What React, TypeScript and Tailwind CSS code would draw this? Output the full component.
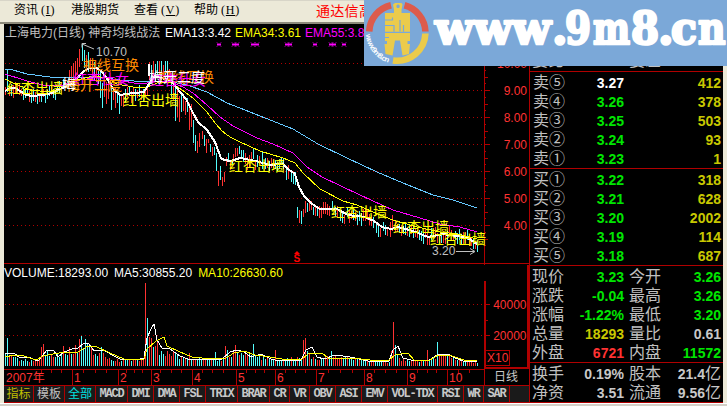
import React from "react";

type Point = [number, number];
type Candle = [number, number, number, number];

const RED = "#ff3232";
const CYAN = "#54fcfc";
const LINE = "#b00000";

const tabs = [
  { label: "指标", width: "w-[30px]", color: "text-[#c0c000]" },
  { label: "模板", width: "w-[31px]", color: "text-[#c0c0c0]" },
  { label: "全部", width: "w-[31px]", color: "text-[#00e0e0]" },
  { label: "MACD", width: "w-[32px]" },
  { label: "DMI", width: "w-[26px]" },
  { label: "DMA", width: "w-[26px]" },
  { label: "FSL", width: "w-[26px]" },
  { label: "TRIX", width: "w-[32px]" },
  { label: "BRAR", width: "w-[32px]" },
  { label: "CR", width: "w-[20px]" },
  { label: "VR", width: "w-[20px]" },
  { label: "OBV", width: "w-[26px]" },
  { label: "ASI", width: "w-[26px]" },
  { label: "EMV", width: "w-[26px]" },
  { label: "VOL-TDX", width: "w-[50px]" },
  { label: "RSI", width: "w-[26px]" },
  { label: "WR", width: "w-[20px]" },
  { label: "SAR", width: "w-[26px]" },
];

const sells = [
  ["卖⑤", "3.27", "412"],
  ["卖④", "3.26", "378"],
  ["卖③", "3.25", "503"],
  ["卖②", "3.24", "93"],
  ["卖①", "3.23", "1"],
];

const buys = [
  ["买①", "3.22", "318"],
  ["买②", "3.21", "628"],
  ["买③", "3.20", "2002"],
  ["买④", "3.19", "114"],
  ["买⑤", "3.18", "687"],
];

const G = "text-[#00e600]";
const Y = "text-[#c8c800]";
const W = "text-[#c8c8c8]";

const stats = [
  ["现价", "3.23", G, "今开", "3.26", G],
  ["涨跌", "-0.04", G, "最高", "3.26", G],
  ["涨幅", "-1.22%", G, "最低", "3.20", G],
  ["总量", "18293", Y, "量比", "0.61", W],
  ["外盘", "6721", "text-[#ff3232]", "内盘", "11572", G],
];

const totals = [
  ["换手", "0.19%", W, "股本", "21.4亿", W],
  ["净资", "3.51", W, "流通", "9.56亿", W],
];

const ema13: Point[] = [
  [5, 91], [10, 88], [15, 88], [20, 91], [26, 95], [33, 96], [42, 95], [53, 93], [59, 89], [66, 87], [72, 84], [79, 76], [84, 71],
  [90, 68], [97, 68], [102, 72], [108, 80], [114, 90], [120, 95], [126, 94], [134, 93], [144, 92], [149, 84], [155, 76],
  [161, 78], [170, 80], [176, 87], [186, 99], [192, 111], [198, 122], [207, 130], [215, 142], [221, 158], [224, 160],
  [231, 161], [240, 158], [256, 161], [270, 165], [283, 164], [288, 169], [295, 174], [299, 187], [304, 196], [312, 204],
  [320, 209], [337, 209], [348, 215], [365, 217], [374, 221], [382, 227], [391, 229], [398, 227], [413, 231], [428, 237],
  [443, 234], [457, 236], [468, 238], [477, 244],
];
const ema34: Point[] = [
  [5, 79], [13, 83], [30, 90], [50, 92], [63, 88], [77, 80], [93, 76], [107, 78], [117, 84], [133, 87], [147, 87], [160, 82],
  [170, 82], [182, 90], [193, 98], [207, 112], [216, 124], [222, 131], [230, 137], [240, 142], [260, 151], [283, 158],
  [295, 163], [303, 173], [320, 189], [343, 201], [357, 205], [380, 215], [393, 220], [417, 227], [440, 232], [457, 234], [477, 239],
];
const ema55: Point[] = [
  [5, 74], [27, 81], [43, 85], [63, 85], [80, 80], [100, 77], [117, 80], [140, 84], [160, 81], [173, 83], [183, 87], [193, 93],
  [207, 105], [220, 117], [233, 126], [243, 131], [257, 138], [273, 144], [293, 153], [307, 167], [322, 177], [343, 187],
  [373, 201], [393, 210], [420, 218], [440, 224], [460, 227], [477, 232],
];
const ema144: Point[] = [
  [5, 69], [13, 70], [27, 74], [50, 77], [80, 78], [100, 77], [120, 80], [147, 82], [167, 81], [187, 85], [207, 92], [227, 103],
  [240, 108], [260, 116], [293, 129], [318, 144], [347, 158], [377, 172], [403, 183], [433, 195], [453, 200], [477, 208],
];

// x, high, low, rising
const swings: Candle[] = [
  [7, 69, 92, 0], [69, 70, 84, 1], [71, 66, 82, 1], [73, 63, 79, 1], [75, 61, 78, 1], [77, 58, 75, 1], [79, 49, 67, 1], [82, 43, 61, 0], [84, 50, 68, 0],
  [86, 55, 68, 1], [88, 52, 72, 0], [90, 58, 71, 1], [92, 61, 75, 1], [94, 62, 80, 0], [96, 67, 82, 1], [98, 65, 84, 0],
  [100, 72, 98, 0], [102, 83, 108, 0], [104, 80, 97, 1], [106, 82, 104, 1], [108, 80, 99, 1], [111, 83, 110, 0], [113, 87, 100, 1],
  [115, 88, 108, 1], [117, 91, 103, 0], [119, 93, 114, 0], [121, 94, 106, 1], [123, 95, 107, 1], [149, 62, 80, 1], [151, 65, 84, 0], [153, 61, 78, 1],
  [155, 64, 82, 0], [157, 61, 76, 0], [159, 61, 78, 1], [161, 61, 80, 0], [163, 65, 78, 1], [165, 61, 82, 0], [167, 61, 78, 0],
  [169, 69, 82, 1], [171, 78, 98, 0], [173, 86, 100, 1], [175, 82, 121, 0], [177, 90, 117, 1], [179, 96, 122, 1], [181, 94, 112, 0],
  [183, 97, 111, 1], [185, 101, 115, 1], [187, 98, 112, 0], [189, 103, 130, 1], [191, 104, 127, 1], [193, 120, 143, 0],
  [195, 135, 151, 0], [197, 141, 153, 1], [199, 133, 147, 1], [202, 131, 139, 1], [204, 135, 146, 0], [206, 139, 153, 1],
  [208, 139, 143, 1], [210, 144, 152, 0], [212, 147, 156, 1], [214, 147, 155, 0], [216, 153, 171, 0], [218, 171, 186, 1],
  [220, 166, 180, 0], [222, 177, 186, 1], [224, 172, 182, 1], [226, 157, 166, 1], [228, 153, 162, 0], [230, 160, 170, 1],
  [232, 159, 165, 0], [233, 154, 162, 1], [235, 148, 157, 1], [237, 148, 156, 1], [239, 146, 154, 0], [241, 150, 158, 0], [253, 148, 159, 0],
  [262, 152, 169, 0], [286, 168, 180, 0], [288, 165, 179, 1], [291, 172, 182, 0], [293, 174, 184, 0], [295, 172, 185, 0],
  [297, 207, 218, 0], [299, 210, 223, 1], [301, 211, 224, 0], [303, 209, 217, 1], [305, 201, 213, 1], [307, 203, 212, 0],
  [309, 201, 211, 1], [311, 201, 210, 1], [313, 207, 215, 0], [315, 207, 216, 1], [317, 208, 216, 0], [332, 201, 210, 0],
  [340, 211, 221, 0], [342, 213, 223, 0], [344, 215, 224, 1], [376, 222, 233, 0], [378, 225, 237, 0], [380, 228, 237, 1], [390, 222, 237, 1], [392, 215, 231, 1],
];

const volumeSpikes: Record<number, [number, number]> = {
  7: [28, 0], 41: [19, 1], 43: [22, 1], 47: [15, 0], 63: [20, 1], 69: [19, 1], 75: [21, 1], 79: [27, 1], 81: [30, 0], 85: [27, 0], 87: [22, 0],
  101: [19, 0], 145: [83, 1], 147: [48, 0], 149: [29, 1], 151: [28, 1], 153: [19, 0], 155: [20, 1], 157: [24, 1], 159: [11, 0],
  163: [12, 0], 189: [13, 1], 215: [14, 0], 225: [20, 1], 227: [16, 0], 233: [16, 1], 235: [21, 1], 253: [22, 0], 275: [16, 1], 303: [26, 1],
  305: [28, 1], 307: [15, 0], 331: [15, 0], 391: [15, 1], 393: [44, 1], 395: [21, 0], 397: [12, 0], 427: [16, 1], 437: [24, 0],
};

const volumeLevel: Point[] = [
  [5, 10], [12, 9], [22, 6], [38, 5], [44, 12], [54, 11], [65, 14], [74, 16], [84, 20], [94, 15], [103, 12], [112, 6], [144, 7],
  [150, 25], [158, 15], [170, 13], [184, 8], [205, 7], [213, 5], [225, 8], [235, 14], [248, 10], [262, 9], [275, 6], [300, 8],
  [308, 13], [316, 5], [330, 10], [350, 8], [365, 6], [388, 4], [395, 13], [402, 6], [425, 5], [436, 9], [446, 12], [460, 5], [477, 4],
];

const ma5: Point[] = [
  [5, 354], [14, 353], [20, 358], [28, 357], [38, 361], [42, 356], [47, 350], [54, 351], [58, 357], [64, 352], [72, 349],
  [78, 348], [84, 343], [89, 344], [94, 351], [104, 350], [112, 355], [120, 359], [136, 360], [144, 358], [147, 338],
  [151, 329], [154, 324], [157, 340], [162, 348], [170, 349], [180, 356], [188, 359], [210, 359], [222, 359], [230, 352],
  [237, 350], [244, 352], [251, 357], [261, 354], [271, 359], [279, 361], [301, 360], [306, 350], [312, 347], [317, 357],
  [324, 359], [335, 355], [350, 357], [368, 361], [389, 361], [393, 350], [398, 346], [403, 358], [411, 360], [428, 361],
  [437, 355], [448, 354], [455, 358], [466, 362], [477, 361],
];
const ma10: Point[] = [
  [5, 357], [14, 355], [24, 356], [36, 360], [43, 356], [53, 354], [66, 352], [78, 352], [88, 346], [97, 347], [110, 353],
  [124, 359], [144, 359], [147, 349], [156, 341], [164, 337], [167, 346], [180, 352], [192, 357], [202, 358], [224, 359],
  [234, 353], [244, 351], [255, 355], [270, 357], [282, 359], [302, 359], [308, 354], [322, 353], [328, 358], [352, 358],
  [370, 360], [388, 361], [395, 355], [408, 353], [414, 360], [430, 360], [438, 355], [452, 356], [464, 360], [477, 361],
];

const dates = [
  { x: 5, label: "2007年" },
  { x: 73, label: "1" },
  { x: 119, label: "2" },
  { x: 152, label: "3" },
  { x: 193, label: "4" },
  { x: 237, label: "5" },
  { x: 276, label: "6" },
  { x: 317, label: "7" },
  { x: 365, label: "8" },
  { x: 408, label: "9" },
  { x: 448, label: "10" },
];

const signals = [
  { x: 83, y: 70, text: "神线互换", fill: "#ff8c00" },
  { x: 158, y: 82, text: "神线互换", fill: "#ff8c00" },
  { x: 73, y: 84, text: "红杏仕女", fill: "#ff00ff" },
  { x: 150, y: 85, text: "红杏仕女", fill: "#ff00ff" },
  { x: 66, y: 90, text: "梅开二度", fill: "#ff9c00" },
  { x: 62, y: 89, text: "梅", fill: "#ffffff" },
  { x: 149, y: 82, text: "梅开二度", fill: "#ffffff" },
  { x: 7, y: 93, text: "红杏出墙", fill: "#ffff00" },
  { x: 123, y: 105, text: "红杏出墙", fill: "#ffff00" },
  { x: 229, y: 171, text: "红杏出墙", fill: "#ffff00" },
  { x: 331, y: 217, text: "红杏出墙", fill: "#ffff00" },
  { x: 393, y: 232, text: "红杏出墙", fill: "#ffff00" },
  { x: 430, y: 244, text: "红杏出墙", fill: "#ffff00" },
];

const toPoints = (points: Point[]) => points.map((p) => p.join(",")).join(" ");

const valueAt = (points: Point[], x: number) => {
  for (let i = 1; i < points.length; i++) {
    const [x0, y0] = points[i - 1];
    const [x1, y1] = points[i];
    if (x <= x1) return y0 + ((y1 - y0) * (x - x0)) / (x1 - x0);
  }
  return points[points.length - 1][1];
};

const noise = (n: number) => {
  const v = Math.sin(n * 12.9898) * 43758.5453;
  return v - Math.floor(v);
};

const candles: Candle[] = [...swings];
for (let x = 5; x < 479; x += 2) {
  if (swings.some((c) => Math.abs(c[0] - x) < 2)) continue;
  const mid = valueAt(ema13, x) + (noise(x) - 0.45) * 7;
  candles.push([x, mid - 3 - noise(x + 3) * 4, mid + 3 + noise(x + 7) * 4, noise(x + 1) > 0.5 ? 1 : 0]);
}

const PriceChart = () => (
  <svg className="block h-[224px] w-[525px]" viewBox="4 41 525 224">
    <g shapeRendering="crispEdges">
      {[63, 90, 117, 144, 171, 198, 225].map((y) => (
        <g key={y} stroke={LINE}>
          <line x1="5" x2="484" y1={y + 0.5} y2={y + 0.5} strokeDasharray="1 3" />
          <line x1="484" x2="490" y1={y + 0.5} y2={y + 0.5} />
          <line x1="484" x2="488" y1={y + 14.5} y2={y + 14.5} />
          <line x1="484" x2="486" y1={y + 7.5} y2={y + 7.5} />
          <line x1="484" x2="486" y1={y + 20.5} y2={y + 20.5} />
        </g>
      ))}
      {candles.map(([x, top, bottom, up], i) => (
        <rect key={i} x={x} y={Math.round(top)} width="1" height={Math.round(bottom - top)} fill={up ? RED : CYAN} />
      ))}
      <g fill="none">
        <polyline points={toPoints(ema144)} stroke="#66c8ff" />
        <polyline points={toPoints(ema55)} stroke="#ff00ff" />
        <polyline points={toPoints(ema34)} stroke="#ffff00" />
        <polyline points={toPoints(ema13)} stroke="#ffffff" strokeWidth="2" />
      </g>
      <path d="M484.5 41v224M4 263.5h525" stroke={LINE} />
      <path d="M148.5 64v12" stroke="#fff" strokeWidth="2" />
    </g>

    {[219, 234, 237, 253, 257, 287, 290, 315, 331, 334, 344].map((x) => (
      <path key={x} d={`M${x - 2} 42.5l4 4m0-4l-4 4M${x - 2} 44.5h4`} stroke="#ff00ff" />
    ))}

    <g fontSize="14">
      {signals.map((s) => (
        <text key={`${s.x}-${s.text}`} x={s.x} y={s.y} fill={s.fill}>
          {s.text}
        </text>
      ))}
    </g>

    <g fill="none" stroke="#c0c0c0">
      <path d="M86 43.5h-4v4M82 44l12 5M456 251.5h18M470 248.5l5 3l-5 3" />
    </g>
    <g fill="#c0c0c0" fontSize="12">
      <text x="96" y="56" textLength="31">10.70</text>
      <text x="432" y="255">3.20</text>
    </g>
    <path d="M294 254l3-3l3 3z" fill="#ff0000" />
    <text x="293.5" y="262" fill="#ff0000" fontSize="10" fontWeight="700">S</text>

    <g fill={RED} fontSize="12" textAnchor="end">
      {["10.00", "9.00", "8.00", "7.00", "6.00", "5.00", "4.00"].map((v, i) => (
        <text key={v} x="527" y={68 + i * 27}>
          {v}
        </text>
      ))}
    </g>
  </svg>
);

const VolumeChart = () => {
  const bars = [];
  for (let x = 5; x < 479; x += 2) {
    const spike = volumeSpikes[x];
    const height = spike ? spike[0] : Math.round(valueAt(volumeLevel, x) * (0.7 + noise(x + 5) * 0.5));
    const up = spike ? spike[1] === 1 : noise(x + 2) > 0.55;
    bars.push(<rect key={x} x={x} y={366 - height} width="1" height={height} fill={up ? RED : CYAN} />);
  }

  return (
    <svg className="block h-[104px] w-[525px]" viewBox="4 281 525 104">
      <g shapeRendering="crispEdges">
        <g stroke={LINE}>
          <path d="M5 304.5h479M5 335.5h479" strokeDasharray="1 3" />
          <path d="M484 304.5h6M484 335.5h6M484 320.5h4M484 350.5h4M4 369.5h480M484.5 368v17" />
          <path d="M485 281v87h43v-87" fill="none" strokeWidth="2" />
          <rect x="485.5" y="350.5" width="24" height="15" fill="#000" />
          {dates.slice(1).map((d) => (
            <line key={d.x} x1={d.x - 0.5} x2={d.x - 0.5} y1="369" y2="385" />
          ))}
          {[42, 52, 62, 84, 96, 107, 127, 135, 143, 161, 172, 182, 203, 213, 224, 247, 256, 265, 286, 296, 306, 329, 341, 353, 375, 386, 397, 418, 428, 437, 459, 470].map((x) => (
            <line key={x} x1={x - 0.5} x2={x - 0.5} y1="369" y2="373" />
          ))}
        </g>
        {bars}
        <g fill="none">
          <polyline points={toPoints(ma5)} stroke="#ffffff" />
          <polyline points={toPoints(ma10)} stroke="#ffff00" />
        </g>
      </g>
      <g fill={RED} fontSize="12">
        {dates.map((d) => (
          <text key={d.x} x={d.x + 1} y="382">
            {d.label}
          </text>
        ))}
        <text x="526.5" y="309" textAnchor="end">40000</text>
        <text x="526.5" y="340" textAnchor="end">20000</text>
        <text x="487" y="362">X10</text>
        <text x="494" y="381" fill="#c8c8c8">日线</text>
      </g>
    </svg>
  );
};

const OrderRow = ({ row, first }: { row: string[]; first?: boolean }) => (
  <div className="flex h-[19px] items-center pr-[2px] pl-[3px] text-sm font-bold">
    <span className="w-[34px] text-base font-normal text-[#c0c0c0]">{row[0]}</span>
    <span className={`w-[57px] text-right ${first ? "text-white" : "text-[#00e600]"}`}>{row[1]}</span>
    <span className="flex-1 text-right text-[#c8c800]">{row[2]}</span>
  </div>
);

const StatRow = ({ row }: { row: string[] }) => (
  <div className="flex h-[19px] items-center pr-[2px] pl-[2px] text-sm font-bold">
    <span className="w-[32px] text-base font-normal text-[#c0c0c0]">{row[0]}</span>
    <span className={`w-[60px] text-right ${row[2]}`}>{row[1]}</span>
    <span className="ml-[5px] w-[32px] text-base font-normal text-[#c0c0c0]">{row[3]}</span>
    <span className={`flex flex-1 items-center justify-end ${row[5]}`}>
      {row[4].replace("亿", "")}
      {row[4].endsWith("亿") && <span className="text-base font-normal">亿</span>}
    </span>
  </div>
);

const Banner = () => (
  <div className="absolute top-0 right-0 h-[66px] w-[363px] bg-[#7ba8d8]">
    <svg className="block h-full w-full" viewBox="364 0 363 66">
      <g fill="none" strokeWidth="6.6">
        <path d="M369.2 31.5A28.2 28.2 0 0 1 391 5.3M404.5 5.3A28.2 28.2 0 0 1 425.4 31.5" stroke="#dc5b4c" />
        <path d="M425.4 33.5A28.2 28.2 0 0 1 393 60.4" stroke="#ebcb4b" />
      </g>
      <path
        fillRule="evenodd"
        d="M395 3h6.5l1 1.5-1 5.5v3h8.5v18.8h-25V13h9v-3l-1-5.5zM398 4.6a1.7 1.7 0 1 0 .1 0z"
        fill="#ebcb4b"
      />
      <path d="M385 33h25v8h-2.5v3h2.5l-1 10-6.5 1.5-2.5-15h-5l-2.5 15-7-1.5-1-10h2.5v-3H385z" fill="#ebcb4b" />
      <path d="M385 20h7.5v-2.5M385 25.5h9v6.3M400 20v11.5M403.5 25v6.8M385 37.5h4" fill="none" stroke="#7ba8d8" strokeWidth="1.2" />
      <path id="ring" d="M366 34.5A31.6 31.6 0 0 0 391.5 63.5" fill="none" />
      <text fill="#fff" fontSize="7.5" fontWeight="700">
        <textPath href="#ring" textLength="38">www.9m8.cn</textPath>
      </text>
      <g
        fill="#fff"
        stroke="#fff"
        strokeWidth="2.6"
        strokeLinejoin="round"
        fontFamily="DejaVu Serif, serif"
        fontWeight="700"
        fontSize="45"
      >
        <text x="435" y="43.5" textLength="116" lengthAdjust="spacingAndGlyphs">www</text>
        <text x="552" y="43.5">.</text>
        <text x="565" y="43.5" textLength="26" lengthAdjust="spacingAndGlyphs">9</text>
        <text x="593" y="43.5" textLength="37" lengthAdjust="spacingAndGlyphs">m</text>
        <text x="631" y="43.5" textLength="28" lengthAdjust="spacingAndGlyphs">8</text>
        <text x="658" y="43.5">.</text>
        <text x="671" y="43.5" textLength="26" lengthAdjust="spacingAndGlyphs">c</text>
        <text x="698" y="43.5" textLength="27.5" lengthAdjust="spacingAndGlyphs">n</text>
      </g>
    </svg>
  </div>
);

const MenuItem = ({ label, hotkey, width }: { label: string; hotkey?: string; width: string }) => (
  <span className={width}>
    {label}
    {hotkey && (
      <span className="ml-[3px] font-['Liberation_Serif'] tracking-[0.8px]">
        (<u>{hotkey}</u>)
      </span>
    )}
  </span>
);

export default function App() {
  return (
    <div className="relative flex h-[406px] w-[727px] flex-col overflow-hidden bg-[#ece9d8] font-['Liberation_Sans','Noto_Sans_CJK_SC',sans-serif] whitespace-nowrap">
      <div className="flex h-6 shrink-0 items-center border-t border-b-2 border-t-[#d8d5c8] border-b-[#8c897a] pb-[3px] pl-[14px] text-xs leading-none text-black">
        <MenuItem label="资讯" hotkey="I" width="w-[57px]" />
        <MenuItem label="港股期货" width="w-[63px]" />
        <MenuItem label="查看" hotkey="V" width="w-[60px]" />
        <MenuItem label="帮助" hotkey="H" width="w-[122px]" />
        <span className="pt-[2px] text-sm leading-none tracking-[0.3px] text-[#ff0000]">通达信高</span>
      </div>

      <div className="flex h-[379px] border-r-4 border-l-4 border-r-[#ece9d8] border-l-[#ece9d8] bg-black leading-none">
        <div className="flex w-[525px] flex-col">
          <div className="flex h-[17px] items-center pl-px text-xs leading-none">
            <span className="w-[160px] text-[#c0c0c0]">上海电力(日线) 神奇均线战法</span>
            <span className="w-[70px] text-white">EMA13:3.42</span>
            <span className="w-[70px] text-[#ffff00]">EMA34:3.61</span>
            <span className="text-[#ff00ff]">EMA55:3.87</span>
          </div>
          <PriceChart />
          <div className="flex h-4 items-center gap-[6px] border-r-2 border-[#b00000] text-xs leading-none">
            <span className="text-white">VOLUME:18293.00</span>
            <span className="text-white">MA5:30855.20</span>
            <span className="text-[#ffff00]">MA10:26630.60</span>
          </div>
          <VolumeChart />
          <div className="flex h-[18px] border-y border-[#b00000] bg-[#1a1a1a]">
            {tabs.map((t) => (
              <span
                key={t.label}
                className={`flex shrink-0 items-center justify-center border-r border-[#b00000] ${t.width} ${
                  t.color ? `text-xs ${t.color}` : "font-['Liberation_Mono'] text-xs font-bold tracking-[-1.2px] text-[#c8c8c8]"
                }`}
              >
                {t.label}
              </span>
            ))}
          </div>
        </div>

        <div className="flex flex-1 flex-col border-l border-[#b00000]">
          <div className="flex h-[48px] items-end border-b border-[#b00000] pb-[2px] pl-[2px] text-base leading-none text-[#c0c0c0]">
            <span className="w-[97px]">委比</span>
            <span>委差</span>
          </div>
          <div className="h-[97px] border-b border-[#b00000] pt-px">
            {sells.map((row, i) => (
              <OrderRow key={row[0]} row={row} first={i === 0} />
            ))}
          </div>
          <div className="h-[97px] border-b border-[#b00000] pt-px">
            {buys.map((row) => (
              <OrderRow key={row[0]} row={row} />
            ))}
          </div>
          <div className="h-[97px] border-b border-[#b00000] pt-px">
            {stats.map((row) => (
              <StatRow key={row[0]} row={row} />
            ))}
          </div>
          <div className="h-[40px] border-b border-[#b00000] pt-px">
            {totals.map((row) => (
              <StatRow key={row[0]} row={row} />
            ))}
          </div>
        </div>
      </div>

      <div className="h-[3px] border-t border-white bg-[#d4d0c8]" />
      <Banner />
    </div>
  );
}
